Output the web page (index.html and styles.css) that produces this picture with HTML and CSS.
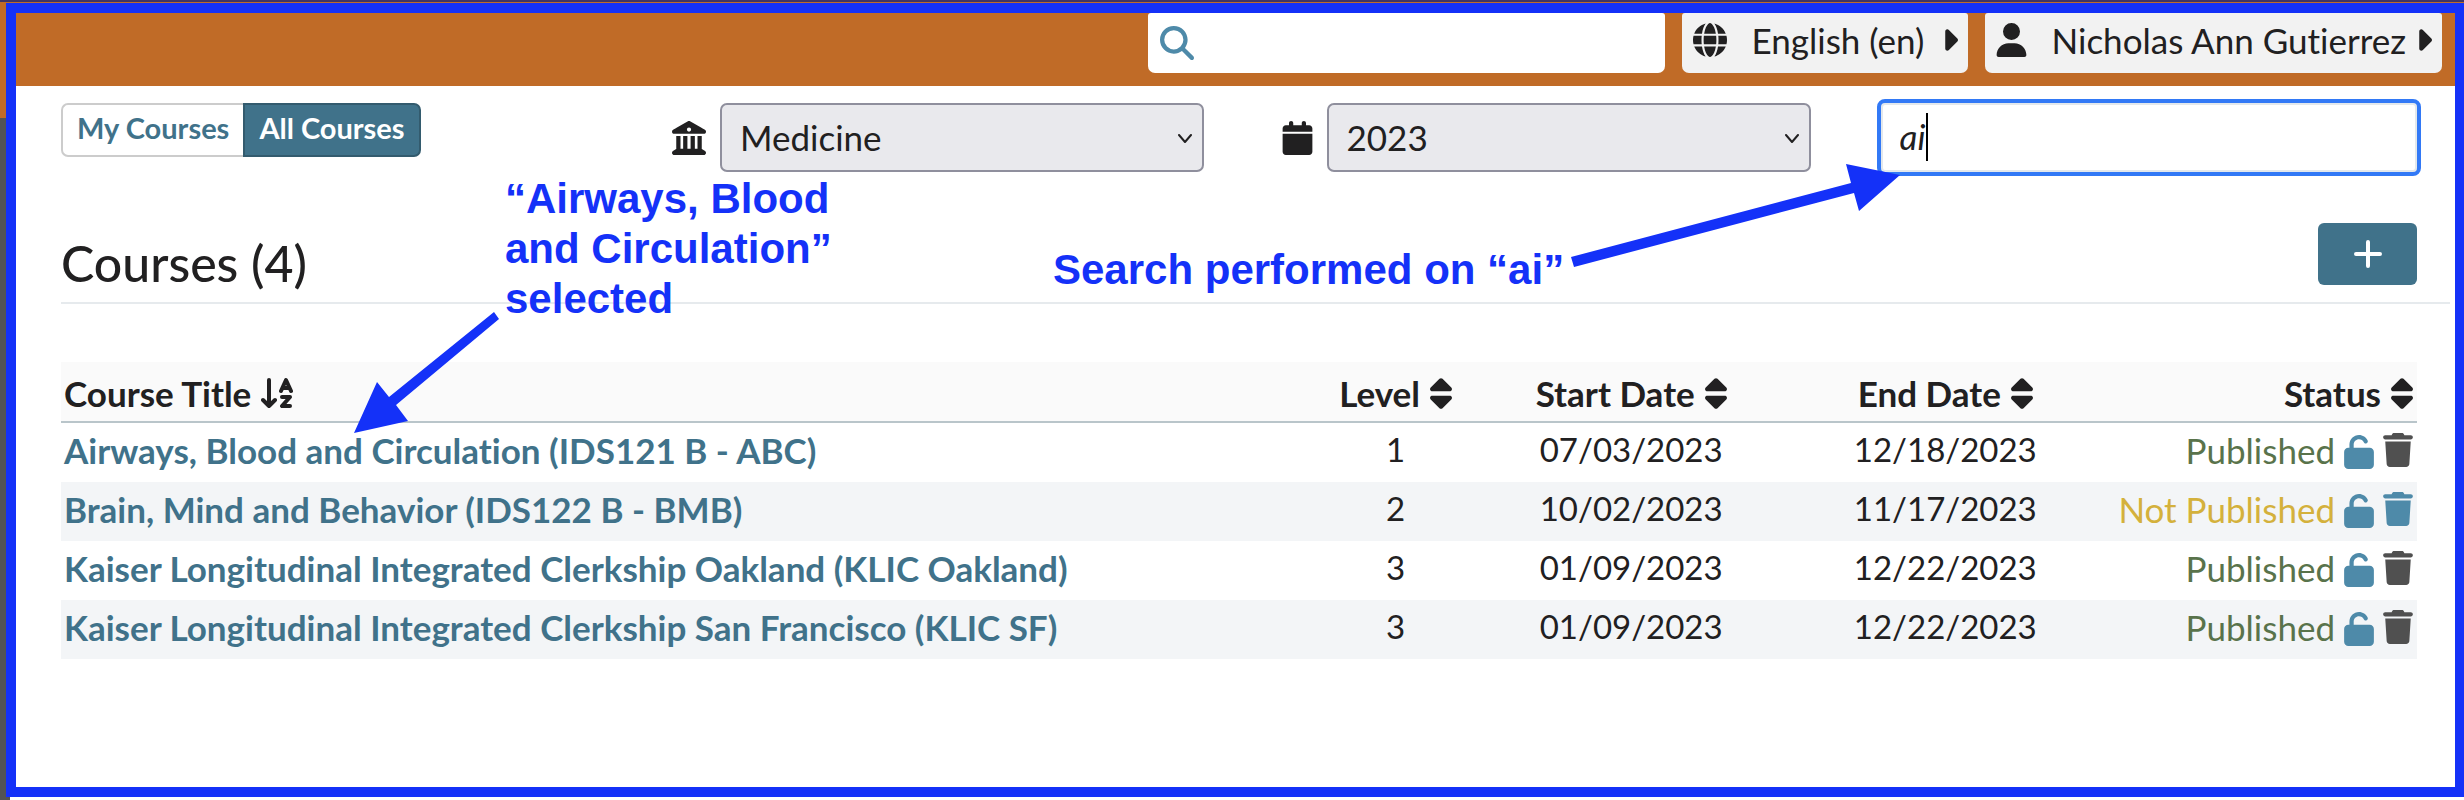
FILE: index.html
```html
<!DOCTYPE html>
<html lang="en">
<head>
<meta charset="utf-8">
<title>Courses</title>
<link rel="stylesheet" href="styles.css">
</head>
<body>
<svg class="sprite" aria-hidden="true">
  <symbol id="sort" viewBox="0 0 320 512"><path d="M137.4 41.4c12.5-12.5 32.8-12.5 45.3 0l128 128c9.2 9.2 11.9 22.9 6.9 34.9s-16.6 19.8-29.6 19.8L32 224c-12.9 0-24.6-7.8-29.6-19.8s-2.2-25.7 6.9-34.9l128-128zm0 429.3l-128-128c-9.2-9.2-11.9-22.9-6.9-34.9s16.6-19.8 29.6-19.8l256 0c12.9 0 24.6 7.8 29.6 19.8s2.2 25.7-6.9 34.9l-128 128c-12.5 12.5-32.8 12.5-45.3 0z"/></symbol>
  <symbol id="sort-az" viewBox="0 0 32 34"><path fill="none" stroke="currentColor" stroke-width="4" stroke-linecap="round" stroke-linejoin="round" d="M8 4v26M2 24l6 6 6-6M20 15l5-11 5 11M22 12h6M21 21h8l-8 9h8"/></symbol>
  <symbol id="unlock" viewBox="0 0 448 512"><path d="M144 144c0-44.2 35.8-80 80-80c31.9 0 59.4 18.6 72.3 45.7c7.6 16 26.7 22.8 42.6 15.2s22.8-26.7 15.2-42.6C331 33.7 281.5 0 224 0C144.5 0 80 64.5 80 144v48H64c-35.3 0-64 28.7-64 64V448c0 35.3 28.7 64 64 64H384c35.3 0 64-28.7 64-64V256c0-35.3-28.7-64-64-64H144V144z"/></symbol>
  <symbol id="trash" viewBox="0 0 448 512"><path d="M135.2 17.7L128 32H32C14.3 32 0 46.3 0 64S14.3 96 32 96H416c17.7 0 32-14.3 32-32s-14.3-32-32-32H320l-7.2-14.3C307.4 6.8 296.3 0 284.2 0H163.8c-12.1 0-23.2 6.8-28.6 17.7zM416 128H32L53.2 467c1.6 25.3 22.6 45 47.9 45H346.9c25.3 0 46.3-19.7 47.9-45L416 128z"/></symbol>
  <symbol id="caret" viewBox="0 0 256 512"><path d="M246.6 278.6c12.5-12.5 12.5-32.8 0-45.3l-128-128c-9.2-9.2-22.9-11.9-34.9-6.9s-19.8 16.6-19.8 29.6l0 256c0 12.9 7.8 24.6 19.8 29.6s25.7 2.2 34.9-6.9l128-128z"/></symbol>
  <symbol id="chevron" viewBox="0 0 14 10"><path fill="none" stroke="currentColor" stroke-width="2" stroke-linecap="round" stroke-linejoin="round" d="M1 1l6 7 6-7"/></symbol>
</svg>

<div class="frame">
  <header class="topbar">
    <label class="global-search">
      <svg class="icon" viewBox="0 0 512 512" aria-hidden="true"><path d="M416 208c0 45.9-14.9 88.3-40 122.7L502.6 457.4c12.5 12.5 12.5 32.8 0 45.3s-32.8 12.5-45.3 0L330.7 376c-34.4 25.2-76.8 40-122.7 40C93.1 416 0 322.9 0 208S93.1 0 208 0S416 93.1 416 208zM208 352a144 144 0 1 0 0-288 144 144 0 1 0 0 288z"/></svg>
      <input type="search" aria-label="Search">
    </label>
    <button class="menu" type="button">
      <svg class="icon" viewBox="0 0 512 512" aria-hidden="true"><path d="M352 256c0 22.2-1.2 43.6-3.3 64H163.3c-2.2-20.4-3.3-41.8-3.3-64s1.2-43.6 3.3-64H348.7c2.2 20.4 3.3 41.8 3.3 64zm28.8-64H503.9c5.3 20.5 8.1 41.9 8.1 64s-2.8 43.5-8.1 64H380.8c2.1-20.6 3.2-42 3.2-64s-1.1-43.4-3.2-64zm112.6-32H376.7c-10-63.9-29.8-117.4-55.3-151.6c78.3 20.7 142 77.5 171.9 151.6zm-149.1 0H167.7c6.1-36.4 15.5-68.6 27-94.7c10.5-23.6 22.2-40.7 33.5-51.5C239.4 3.2 248.7 0 256 0s16.6 3.2 27.8 13.8c11.3 10.8 23 27.9 33.5 51.5c11.6 26 20.9 58.2 27 94.7zm-209 0H18.6C48.6 85.9 112.2 29.1 190.6 8.4C165.1 42.6 145.3 96.1 135.3 160zM8.1 192H131.2c-2.1 20.6-3.2 42-3.2 64s1.1 43.4 3.2 64H8.1C2.8 299.5 0 278.1 0 256s2.8-43.5 8.1-64zM194.7 446.6c-11.6-26-20.9-58.2-27-94.6H344.3c-6.1 36.4-15.5 68.6-27 94.6c-10.5 23.6-22.2 40.7-33.5 51.5C272.6 508.8 263.3 512 256 512s-16.6-3.2-27.8-13.8c-11.3-10.8-23-27.9-33.5-51.5zM135.3 352c10 63.9 29.8 117.4 55.3 151.6C112.2 482.9 48.6 426.1 18.6 352H135.3zm358.1 0c-30 74.1-93.6 130.9-171.9 151.6c25.5-34.2 45.2-87.7 55.3-151.6H493.4z"/></svg>
      <span class="menu-label">English (en)</span>
      <svg class="caret" aria-hidden="true"><use href="#caret"/></svg>
    </button>
    <button class="menu" type="button">
      <svg class="icon narrow" viewBox="0 0 448 512" aria-hidden="true"><path d="M224 256A128 128 0 1 0 224 0a128 128 0 1 0 0 256zm-45.7 48C79.8 304 0 383.8 0 482.3C0 498.7 13.3 512 29.7 512H418.3c16.4 0 29.7-13.3 29.7-29.7C448 383.8 368.2 304 269.7 304H178.3z"/></svg>
      <span class="menu-label">Nicholas Ann Gutierrez</span>
      <svg class="caret" aria-hidden="true"><use href="#caret"/></svg>
    </button>
  </header>

  <main>
    <div class="filters">
      <div class="toggle">
        <button type="button">My Courses</button>
        <button type="button" class="active">All Courses</button>
      </div>
      <div class="picker">
        <svg class="icon" viewBox="0 0 512 512" aria-hidden="true"><path fill-rule="evenodd" d="M240.1 4.2c9.8-5.6 21.9-5.6 31.8 0l171.8 98.1L448 104l0 .9 47.9 27.4c12.6 7.2 18.8 22 15.1 36s-16.4 23.8-30.9 23.8H32c-14.5 0-27.2-9.8-30.9-23.8s2.5-28.8 15.1-36L64 104.9V104l4.4-1.6L240.1 4.2zM64 224h64V416h40V224h64V416h48V224h64V416h40V224h64V420.3c.6 .3 1.2 .7 1.8 1.1l48 32c11.7 7.8 17 22.4 12.9 35.9S494.1 512 480 512H32c-14.1 0-26.5-9.2-30.6-22.7s1.1-28.1 12.9-35.9l48-32c.6-.4 1.2-.7 1.8-1.1V224zM256 160a32 32 0 1 0 0-64 32 32 0 1 0 0 64z"/></svg>
        <div class="select">
          <select aria-label="School"><option>Medicine</option></select>
          <svg aria-hidden="true"><use href="#chevron"/></svg>
        </div>
      </div>
      <div class="picker">
        <svg class="icon narrow" viewBox="0 0 448 512" aria-hidden="true"><path d="M96 32V64H48C21.5 64 0 85.5 0 112v48H448V112c0-26.5-21.5-48-48-48H352V32c0-17.7-14.3-32-32-32s-32 14.3-32 32V64H160V32c0-17.7-14.3-32-32-32S96 14.3 96 32zM448 192H0V464c0 26.5 21.5 48 48 48H400c26.5 0 48-21.5 48-48V192z"/></svg>
        <div class="select">
          <select aria-label="Academic year"><option>2023</option></select>
          <svg aria-hidden="true"><use href="#chevron"/></svg>
        </div>
      </div>
      <div class="title-filter">
        <input type="text" aria-label="Filter by title" value="ai">
        <span class="text-cursor" aria-hidden="true"></span>
      </div>
    </div>

    <div class="list-header">
      <h1>Courses (4)</h1>
      <button type="button" class="add" aria-label="New course">
        <svg viewBox="0 0 28 28" aria-hidden="true"><path d="M14 2v24M2 14h24"/></svg>
      </button>
    </div>

    <table>
      <colgroup><col class="c-title"><col class="c-level"><col class="c-date"><col class="c-date"><col class="c-status"></colgroup>
      <thead>
        <tr>
          <th class="title"><button type="button">Course Title <svg class="az"><use href="#sort-az"/></svg></button></th>
          <th><button type="button">Level <svg><use href="#sort"/></svg></button></th>
          <th><button type="button">Start Date <svg><use href="#sort"/></svg></button></th>
          <th><button type="button">End Date <svg><use href="#sort"/></svg></button></th>
          <th class="status"><button type="button">Status <svg><use href="#sort"/></svg></button></th>
        </tr>
      </thead>
      <tbody>
        <tr>
          <td class="title"><a href="#">Airways, Blood and Circulation (IDS121 B - ABC)</a></td>
          <td>1</td><td>07/03/2023</td><td>12/18/2023</td>
          <td class="status"><div><span class="published">Published</span><button type="button" class="lock" aria-label="Lock"><svg><use href="#unlock"/></svg></button><button type="button" class="trash" disabled aria-label="Delete"><svg><use href="#trash"/></svg></button></div></td>
        </tr>
        <tr>
          <td class="title"><a href="#">Brain, Mind and Behavior (IDS122 B - BMB)</a></td>
          <td>2</td><td>10/02/2023</td><td>11/17/2023</td>
          <td class="status"><div><span class="draft">Not Published</span><button type="button" class="lock" aria-label="Lock"><svg><use href="#unlock"/></svg></button><button type="button" class="trash" aria-label="Delete"><svg><use href="#trash"/></svg></button></div></td>
        </tr>
        <tr>
          <td class="title"><a href="#">Kaiser Longitudinal Integrated Clerkship Oakland (KLIC Oakland)</a></td>
          <td>3</td><td>01/09/2023</td><td>12/22/2023</td>
          <td class="status"><div><span class="published">Published</span><button type="button" class="lock" aria-label="Lock"><svg><use href="#unlock"/></svg></button><button type="button" class="trash" disabled aria-label="Delete"><svg><use href="#trash"/></svg></button></div></td>
        </tr>
        <tr>
          <td class="title"><a href="#">Kaiser Longitudinal Integrated Clerkship San Francisco (KLIC SF)</a></td>
          <td>3</td><td>01/09/2023</td><td>12/22/2023</td>
          <td class="status"><div><span class="published">Published</span><button type="button" class="lock" aria-label="Lock"><svg><use href="#unlock"/></svg></button><button type="button" class="trash" disabled aria-label="Delete"><svg><use href="#trash"/></svg></button></div></td>
        </tr>
      </tbody>
    </table>
  </main>
</div>

<svg class="arrows" width="2464" height="800" viewBox="0 0 2464 800" aria-hidden="true">
  <path d="M494 312l5 7L396 405l12 16-54 12 23-51 12 15z"/>
  <path d="M1571 257l280-74-5-19 54 11-41 36-5-18-280 74z"/>
</svg>
<p class="note note-course">“Airways, Blood<br>and Circulation”<br>selected</p>
<p class="note note-search">Search performed on “ai”</p>
</body>
</html>
```
FILE: styles.css
```css
* { box-sizing: border-box; }

:root {
  --orange: #c06b27;
  --blue: #1431f8;
  --teal: #40728a;
  --light-teal: #4e8aa9;
  --ink: #212021;
}

body {
  margin: 0;
  padding: 3px 0 3px 6px;
  min-height: 100vh;
  color: var(--ink);
  font: 35px/1.2 Lato, sans-serif;
  font-variant-ligatures: none;
  background:
    linear-gradient(#3f3565 2px, var(--orange) 2px) top / 100% 3px no-repeat,
    linear-gradient(var(--orange) 118px, #535353 118px) left / 10px 100% no-repeat,
    #fff;
}

button, input, select {
  font: inherit;
  font-variant-ligatures: inherit;
  color: inherit;
}

button {
  border: 0;
  padding: 0;
  background: none;
}

svg { display: block; fill: currentColor; }

.sprite { position: absolute; width: 0; height: 0; }

.icon { width: 34px; height: 34px; flex: none; }
.icon.narrow { width: 31px; }

.frame {
  min-height: calc(100vh - 6px);
  border: 10px solid var(--blue);
  border-right-width: 9px;
  background: #fff;
}

/* Top bar */
.topbar {
  display: flex;
  justify-content: flex-end;
  gap: 17px;
  height: 73px;
  padding: 0 13px 13px 0;
  background: var(--orange);
}

.global-search {
  display: flex;
  align-items: center;
  gap: 12px;
  width: 517px;
  padding: 0 12px 0 12px;
  border-radius: 3px 3px 7px 7px;
  background: #fff;
  color: var(--light-teal);
}

.global-search input {
  flex: 1;
  min-width: 0;
  border: 0;
  outline: 0;
  background: none;
}

.menu {
  display: flex;
  align-items: center;
  min-width: 286px;
  padding: 0 10px 6px 11px;
  border-radius: 3px 3px 7px 7px;
  background: #f2f2f2;
  white-space: nowrap;
}

.menu-label { margin: 0 9px 0 25px; }

.caret { width: 17px; height: 34px; margin-left: auto; }

/* Filters */
main { padding: 17px 38px 0 45px; }

.filters {
  display: grid;
  grid-template-columns: repeat(4, minmax(0, 1fr));
  gap: 70px;
  align-items: start;
}

.toggle { display: flex; }

.toggle button {
  height: 54px;
  padding: 0 14px 4px;
  border: 2px solid #ccc;
  border-right: 0;
  border-radius: 7px 0 0 7px;
  background: #fff;
  color: var(--teal);
  font-size: 29px;
  font-weight: 700;
}

.toggle .active {
  border: 2px solid #335b6e;
  border-radius: 0 7px 7px 0;
  background: var(--teal);
  color: #fff;
}

.picker {
  display: flex;
  align-items: center;
  justify-content: flex-end;
  gap: 14px;
}

.select { position: relative; width: 484px; }

.select select {
  display: block;
  width: 100%;
  height: 69px;
  padding: 0 40px 2px 18px;
  border: 2px solid #8f8f9d;
  border-radius: 7px;
  background: #e9e9ed;
  appearance: none;
}

.select svg {
  position: absolute;
  top: 31px;
  right: 12px;
  width: 14px;
  height: 10px;
}

.title-filter { position: relative; }

.title-filter input {
  display: block;
  width: 100%;
  height: 69px;
  padding: 0 17px 4px;
  border: 2px solid #e3e8ec;
  border-radius: 4px;
  outline: 4px solid #3279f6;
  background: #fff;
  font-style: italic;
}

.text-cursor {
  position: absolute;
  top: 10px;
  left: 45px;
  width: 2px;
  height: 48px;
  background: #000;
}

/* List header */
.list-header {
  display: flex;
  align-items: center;
  justify-content: space-between;
  margin: 51px -33px 58px 0;
  padding: 0 33px 17px 0;
  border-bottom: 2px solid #e6eaed;
}

h1 {
  margin: 0;
  padding-top: 18px;
  font-size: 50px;
  font-weight: 500;
  line-height: 42px;
}

.add {
  display: grid;
  place-items: center;
  width: 99px;
  height: 62px;
  border-radius: 6px;
  background: var(--teal);
  color: #fff;
}

.add svg {
  width: 28px;
  height: 28px;
  stroke: currentColor;
  stroke-width: 4px;
  stroke-linecap: round;
}

/* Course table */
table {
  width: 100%;
  table-layout: fixed;
  border-collapse: separate;
  border-spacing: 0;
}

.c-title { width: calc(100% * 8 / 15); }
.c-level { width: calc(100% / 15); }
.c-date, .c-status { width: calc(100% * 2 / 15); }

th, td {
  height: 59px;
  padding: 0 4px 5px 3px;
  text-align: center;
  white-space: nowrap;
}

th {
  height: 61px;
  padding-bottom: 2px;
  background: #fafafa;
  border-bottom: 2px solid #b9c5ca;
  font-size: 35px;
  font-weight: 700;
}

th button {
  display: inline-flex;
  align-items: center;
  gap: 10px;
  font-weight: inherit;
  vertical-align: middle;
}

th svg { width: 22px; height: 35px; }
th .az { width: 32px; height: 34px; }

td { font-size: 33px; }

tbody tr:nth-child(even) { background: #f3f5f7; }

.title { text-align: left; }
td.title { font-size: 35px; }

.title a {
  color: var(--teal);
  font-weight: 700;
  text-decoration: none;
}

.status { text-align: right; }

.status div {
  display: flex;
  align-items: center;
  justify-content: flex-end;
  gap: 9px;
  font-size: 35px;
}

.status div svg { width: 30px; height: 34px; }

.published { color: #59734b; }
.draft { color: #d4b13c; }
.lock, .trash { color: var(--light-teal); }
.lock { padding-top: 3px; }
.trash:disabled { color: #505050; }

/* Annotations drawn over the page */
.arrows {
  position: absolute;
  top: 0;
  left: 0;
  fill: var(--blue);
  pointer-events: none;
}

.note {
  position: absolute;
  margin: 0;
  color: var(--blue);
  font: 700 42px/50px "Liberation Sans", Arial, sans-serif;
  white-space: nowrap;
}

.note-course { top: 174px; left: 505px; }
.note-search { top: 245px; left: 1053px; }
```
